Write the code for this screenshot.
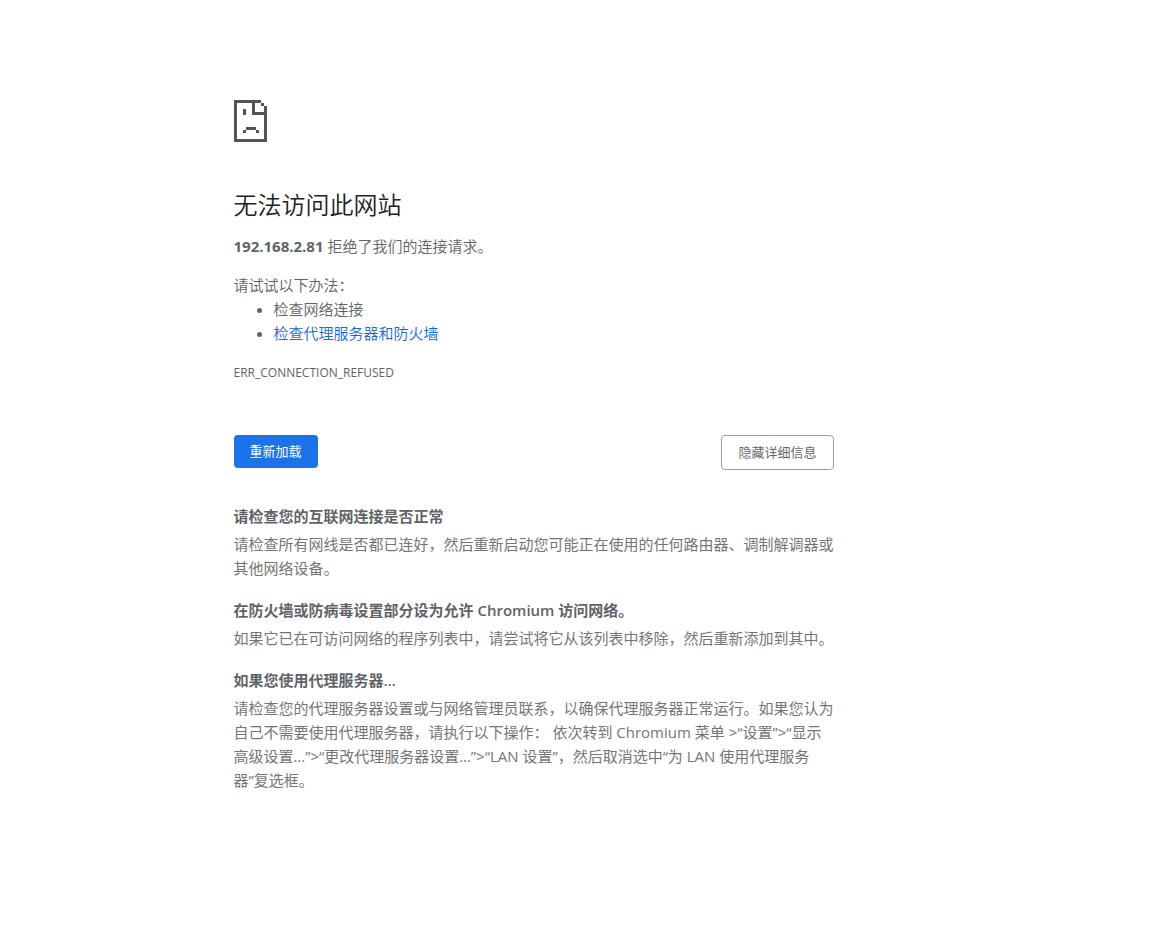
<svelte:head>
  <title>192.168.2.81</title>
</svelte:head>

<main>
  <svg class="icon" viewBox="0 0 33 42" shape-rendering="crispEdges" aria-hidden="true">
    <path fill="#535353" fill-rule="evenodd" d="M0 0H27V3H21V12H33V42H0ZM3 3V39H30V15H18V3ZM27 3H30V6H27ZM30 6H33V12H30ZM9 9H12V15H9ZM12 27H22V30H12ZM9 30H12V33H9ZM22 30H25V33H22Z" />
  </svg>

  <h1>无法访问此网站</h1>
  <p class="summary"><strong>192.168.2.81</strong> 拒绝了我们的连接请求。</p>

  <div class="suggestions">
    <p>请试试以下办法：</p>
    <ul>
      <li>检查网络连接</li>
      <li><a href="#details">检查代理服务器和防火墙</a></li>
    </ul>
  </div>
  <div class="code">ERR_CONNECTION_REFUSED</div>

  <div class="buttons">
    <button class="primary" type="button">重新加载</button>
    <button class="secondary" type="button">隐藏详细信息</button>
  </div>

  <div class="details" id="details">
    <section>
      <h2>请检查您的互联网连接是否正常</h2>
      <p>请检查所有网线是否都已连好，然后重新启动您可能正在使用的任何路由器、调制解调器或其他网络设备。</p>
    </section>
    <section>
      <h2>在防火墙或防病毒设置部分设为允许 Chromium 访问网络。</h2>
      <p>如果它已在可访问网络的程序列表中，请尝试将它从该列表中移除，然后重新添加到其中。</p>
    </section>
    <section>
      <h2>如果您使用代理服务器…</h2>
      <p>请检查您的代理服务器设置或与网络管理员联系，以确保代理服务器正常运行。如果您认为自己不需要使用代理服务器，请执行以下操作： 依次转到 Chromium 菜单 &gt;“设置”&gt;“显示高级设置…”&gt;“更改代理服务器设置…”&gt;“LAN 设置”，然后取消选中“为 LAN 使用代理服务器”复选框。</p>
    </section>
  </div>
</main>

<style>
  :global(body) {
    margin: 0;
    background: #fff;
  }
  main {
    box-sizing: border-box;
    width: 100%;
    max-width: 600px;
    margin: 0 auto;
    padding-top: 100px;
    color: #5f6368;
    font: 15px/24px "Open Sans", "Noto Sans CJK SC", sans-serif;
  }
  @media (min-width: 900px) {
    main {
      margin-left: calc(50% - 346px);
    }
  }
  .icon {
    display: block;
    width: 33px;
    height: 42px;
  }
  h1,
  h2,
  p,
  ul {
    margin: 0;
  }
  h1 {
    margin-top: 48px;
    color: #202124;
    font-size: 24px;
    font-weight: 350;
    line-height: 30px;
  }
  .summary {
    margin-top: 14px;
  }
  .summary,
  .suggestions {
    font-weight: 350;
  }
  strong {
    font-weight: 700;
  }
  .suggestions {
    margin-top: 15px;
  }
  ul {
    padding-left: 40px;
  }
  a {
    color: #1967d2;
    text-decoration: none;
  }
  .code {
    margin-top: 16px;
    font-size: 12px;
  }
  .buttons {
    display: flex;
    justify-content: space-between;
    align-items: flex-start;
    margin-top: 50px;
  }
  button {
    padding: 8px 16px;
    border: 0;
    border-radius: 4px;
    font: 13px/17px "Open Sans", "Noto Sans CJK SC", sans-serif;
    cursor: pointer;
  }
  .primary {
    background: #1a73e8;
    color: #fff;
  }
  .secondary {
    border: 1px solid #9aa0a6;
    background: #fff;
    color: #696969;
  }
  .details {
    margin-top: 34px;
    color: #757575;
  }
  section + section {
    margin-top: 18px;
  }
  h2 {
    margin-bottom: 4px;
    color: #5f6368;
    font-size: 15px;
    font-weight: 600;
    line-height: 24px;
  }
</style>
